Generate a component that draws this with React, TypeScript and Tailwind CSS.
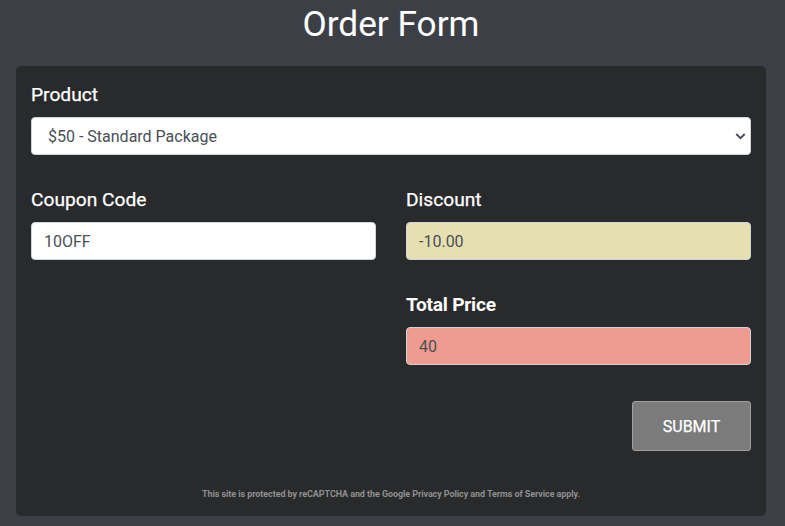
import { useState } from "react";
import type { ReactNode } from "react";

function Field({ label, bold = false, children }: { label: string; bold?: boolean; children: ReactNode }) {
  return (
    <label className="block h-[105px]">
      <span
        className={`mb-[11px] block h-[23px] text-[19.2px] leading-[23px] whitespace-nowrap ${
          bold ? "font-bold tracking-[-0.25px]" : "font-normal [-webkit-text-stroke:0.25px_white]"
        }`}
      >
        {label}
      </span>
      {children}
    </label>
  );
}

const control =
  "block h-[38px] w-full rounded-[4px] border border-[#ced4da] text-base leading-6 text-[#495057] outline-none";

export default function App() {
  const [coupon, setCoupon] = useState("10OFF");

  return (
    <main className="h-[526px] w-[785px] overflow-hidden bg-[#3d3f47] pr-[19px] pl-4 font-['Roboto',sans-serif] text-white">
      <h1 className="h-[66px] pt-[3px] text-center text-[35.2px] leading-[43px] font-normal">Order Form</h1>
      <form className="h-[450px] rounded-[5px] bg-[#292a2b] px-[15px] pt-[17px]" onSubmit={(e) => e.preventDefault()}>
        <Field label="Product">
          <div className="relative">
            <select className={`${control} appearance-none bg-white px-4 pt-px`}>
              <option>$50 - Standard Package</option>
            </select>
            <svg className="pointer-events-none absolute top-[16px] right-[5px] h-[7px] w-[11px]" viewBox="0 0 11 7" fill="none" stroke="#495057" strokeWidth="2">
              <path d="M1.3 1 5.5 5.2 9.7 1" />
            </svg>
          </div>
        </Field>
        <div className="grid grid-cols-2 gap-x-[30px]">
          <Field label="Coupon Code">
            <input className={`${control} bg-white px-3`} value={coupon} onChange={(e) => setCoupon(e.target.value)} />
          </Field>
          <Field label="Discount">
            <input className={`${control} bg-[#e6dfb0] px-3`} value="-10.00" readOnly />
          </Field>
          <div className="col-start-2">
            <Field label="Total Price" bold>
              <input className={`${control} bg-[#f09b90] px-3`} value="40" readOnly />
            </Field>
          </div>
        </div>
        <div className="flex justify-end pt-[3px]">
          <button className="h-[50px] w-[119px] rounded-[3px] border border-[#a0a0a0] bg-[#7b7b7b] pt-[2px] text-base font-normal [-webkit-text-stroke:0.25px_white]">
            SUBMIT
          </button>
        </div>
        <p className="pt-[36px] text-center text-[9px] leading-[14px] font-bold tracking-[-0.08px] whitespace-nowrap text-[#8f8f90]">
          This site is protected by reCAPTCHA and the Google Privacy Policy and Terms of Service apply.
        </p>
      </form>
    </main>
  );
}
